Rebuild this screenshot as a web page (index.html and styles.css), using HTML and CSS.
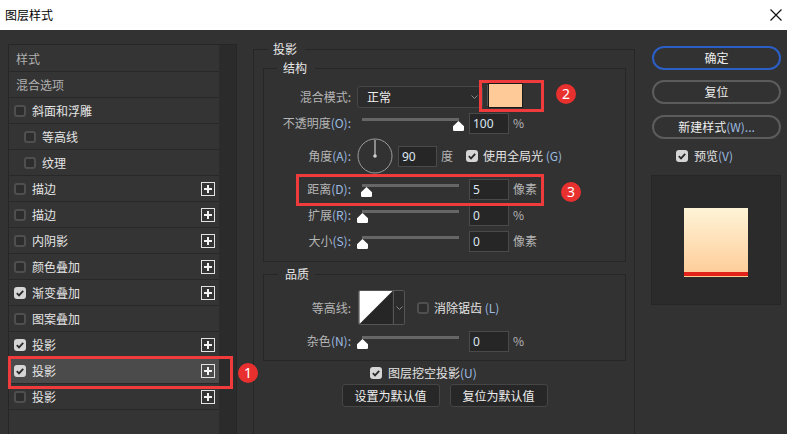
FILE: index.html
```html
<!DOCTYPE html>
<html lang="zh-CN">
<head>
<meta charset="utf-8">
<title>图层样式</title>
<link rel="stylesheet" href="styles.css">
</head>
<body>
<div class="window">
  <header class="titlebar">
    <span class="title">图层样式</span>
    <svg class="close" viewBox="0 0 12 12" width="12" height="12"><path d="M0.5 0.5L11.5 11.5M11.5 0.5L0.5 11.5" stroke="#111" stroke-width="1.2" fill="none"/></svg>
  </header>

  <div class="main">
    <aside class="styles-panel">
      <div class="list">
        <div class="row head">样式</div>
        <div class="row head">混合选项</div>
        <div class="row"><span class="cb"></span><span class="name">斜面和浮雕</span></div>
        <div class="row sub"><span class="cb"></span><span class="name">等高线</span></div>
        <div class="row sub"><span class="cb"></span><span class="name">纹理</span></div>
        <div class="row"><span class="cb"></span><span class="name">描边</span><svg class="plus" viewBox="0 0 14 14" width="14" height="14"><rect x="0.5" y="0.5" width="13" height="13" fill="none" stroke="#e2e2e2"/><path d="M7 3v8M3 7h8" stroke="#f2f2f2" stroke-width="2"/></svg></div>
        <div class="row"><span class="cb"></span><span class="name">描边</span><svg class="plus" viewBox="0 0 14 14" width="14" height="14"><rect x="0.5" y="0.5" width="13" height="13" fill="none" stroke="#e2e2e2"/><path d="M7 3v8M3 7h8" stroke="#f2f2f2" stroke-width="2"/></svg></div>
        <div class="row"><span class="cb"></span><span class="name">内阴影</span><svg class="plus" viewBox="0 0 14 14" width="14" height="14"><rect x="0.5" y="0.5" width="13" height="13" fill="none" stroke="#e2e2e2"/><path d="M7 3v8M3 7h8" stroke="#f2f2f2" stroke-width="2"/></svg></div>
        <div class="row"><span class="cb"></span><span class="name">颜色叠加</span><svg class="plus" viewBox="0 0 14 14" width="14" height="14"><rect x="0.5" y="0.5" width="13" height="13" fill="none" stroke="#e2e2e2"/><path d="M7 3v8M3 7h8" stroke="#f2f2f2" stroke-width="2"/></svg></div>
        <div class="row"><span class="cb on"><svg viewBox="0 0 12 12" width="12" height="12"><path d="M2.8 6.2l2.2 2.2 4.2-4.6" fill="none" stroke="#2a2a2a" stroke-width="1.8"/></svg></span><span class="name">渐变叠加</span><svg class="plus" viewBox="0 0 14 14" width="14" height="14"><rect x="0.5" y="0.5" width="13" height="13" fill="none" stroke="#e2e2e2"/><path d="M7 3v8M3 7h8" stroke="#f2f2f2" stroke-width="2"/></svg></div>
        <div class="row"><span class="cb"></span><span class="name">图案叠加</span></div>
        <div class="row"><span class="cb on"><svg viewBox="0 0 12 12" width="12" height="12"><path d="M2.8 6.2l2.2 2.2 4.2-4.6" fill="none" stroke="#2a2a2a" stroke-width="1.8"/></svg></span><span class="name">投影</span><svg class="plus" viewBox="0 0 14 14" width="14" height="14"><rect x="0.5" y="0.5" width="13" height="13" fill="none" stroke="#e2e2e2"/><path d="M7 3v8M3 7h8" stroke="#f2f2f2" stroke-width="2"/></svg></div>
        <div class="row sel"><span class="cb on"><svg viewBox="0 0 12 12" width="12" height="12"><path d="M2.8 6.2l2.2 2.2 4.2-4.6" fill="none" stroke="#2a2a2a" stroke-width="1.8"/></svg></span><span class="name">投影</span><svg class="plus" viewBox="0 0 14 14" width="14" height="14"><rect x="0.5" y="0.5" width="13" height="13" fill="none" stroke="#e2e2e2"/><path d="M7 3v8M3 7h8" stroke="#f2f2f2" stroke-width="2"/></svg></div>
        <div class="row"><span class="cb"></span><span class="name">投影</span><svg class="plus" viewBox="0 0 14 14" width="14" height="14"><rect x="0.5" y="0.5" width="13" height="13" fill="none" stroke="#e2e2e2"/><path d="M7 3v8M3 7h8" stroke="#f2f2f2" stroke-width="2"/></svg></div>
      </div>
      <div class="scroll"></div>
    </aside>

    <section class="settings">
      <fieldset class="outer">
        <legend>投影</legend>

        <fieldset class="sect">
          <legend>结构</legend>
          <div class="form">
            <span class="lbl">混合模式:</span>
            <div class="ctl">
              <div class="select"><span>正常</span><svg viewBox="0 0 7 4" width="7" height="4"><path d="M0.5 0.5L3.5 3.5L6.5 0.5" fill="none" stroke="#8a8a8a"/></svg></div>
              <span class="swatch"></span>
            </div>

            <span class="lbl">不透明度<span class="k">(O):</span></span>
            <div class="ctl">
              <div class="slider"><div class="track"></div><svg class="thumb" style="margin-left:96px" viewBox="0 0 11 10" width="11" height="10"><path d="M5.5 0L11 5.2V8.8Q11 10 9.8 10H1.2Q0 10 0 8.8V5.2Z" fill="#fff"/></svg></div>
              <span class="num">100</span>
              <span class="unit k">%</span>
            </div>

            <span class="lbl">角度<span class="k">(A):</span></span>
            <div class="ctl">
              <svg class="dial" viewBox="0 0 36 36" width="36" height="36"><circle cx="18" cy="18" r="17" fill="none" stroke="#9c9c9c"/><path d="M18 18V2" stroke="#c8c8c8" stroke-width="1.2"/><circle cx="18" cy="18" r="1.8" fill="#d0d0d0"/></svg>
              <span class="num angle">90</span>
              <span class="unit">度</span>
              <span class="cb on global"><svg viewBox="0 0 12 12" width="12" height="12"><path d="M2.8 6.2l2.2 2.2 4.2-4.6" fill="none" stroke="#2a2a2a" stroke-width="1.8"/></svg></span>
              <span class="opt">使用全局光 <span class="k">(G)</span></span>
            </div>

            <span class="lbl">距离<span class="k">(D):</span></span>
            <div class="ctl">
              <div class="slider"><div class="track"></div><svg class="thumb" style="margin-left:4px" viewBox="0 0 11 10" width="11" height="10"><path d="M5.5 0L11 5.2V8.8Q11 10 9.8 10H1.2Q0 10 0 8.8V5.2Z" fill="#fff"/></svg></div>
              <span class="num">5</span>
              <span class="unit">像素</span>
            </div>

            <span class="lbl">扩展<span class="k">(R):</span></span>
            <div class="ctl">
              <div class="slider"><div class="track"></div><svg class="thumb" style="margin-left:0px" viewBox="0 0 11 10" width="11" height="10"><path d="M5.5 0L11 5.2V8.8Q11 10 9.8 10H1.2Q0 10 0 8.8V5.2Z" fill="#fff"/></svg></div>
              <span class="num">0</span>
              <span class="unit k">%</span>
            </div>

            <span class="lbl">大小<span class="k">(S):</span></span>
            <div class="ctl">
              <div class="slider"><div class="track"></div><svg class="thumb" style="margin-left:0px" viewBox="0 0 11 10" width="11" height="10"><path d="M5.5 0L11 5.2V8.8Q11 10 9.8 10H1.2Q0 10 0 8.8V5.2Z" fill="#fff"/></svg></div>
              <span class="num">0</span>
              <span class="unit">像素</span>
            </div>
          </div>
        </fieldset>

        <fieldset class="sect quality">
          <legend>品质</legend>
          <div class="form">
            <span class="lbl">等高线:</span>
            <div class="ctl">
              <div class="contour">
                <svg viewBox="0 0 35 35" width="35" height="35"><rect width="35" height="35" fill="#262626"/><path d="M0 0H35L0 35Z" fill="#fff"/></svg>
                <span class="drop"><svg viewBox="0 0 7 4" width="7" height="4"><path d="M0.5 0.5L3.5 3.5L6.5 0.5" fill="none" stroke="#8a8a8a"/></svg></span>
              </div>
              <span class="cb anti"></span>
              <span class="opt">消除锯齿 <span class="k">(L)</span></span>
            </div>

            <span class="lbl">杂色<span class="k">(N):</span></span>
            <div class="ctl">
              <div class="slider"><div class="track"></div><svg class="thumb" style="margin-left:0px" viewBox="0 0 11 10" width="11" height="10"><path d="M5.5 0L11 5.2V8.8Q11 10 9.8 10H1.2Q0 10 0 8.8V5.2Z" fill="#fff"/></svg></div>
              <span class="num">0</span>
              <span class="unit k">%</span>
            </div>
          </div>
        </fieldset>

        <div class="knockout">
          <span class="cb on"><svg viewBox="0 0 12 12" width="12" height="12"><path d="M2.8 6.2l2.2 2.2 4.2-4.6" fill="none" stroke="#2a2a2a" stroke-width="1.8"/></svg></span>
          <span class="opt">图层挖空投影<span class="k">(U)</span></span>
        </div>

        <div class="defaults">
          <span class="dbtn">设置为默认值</span>
          <span class="dbtn">复位为默认值</span>
        </div>
      </fieldset>
    </section>

    <aside class="actions">
      <span class="btn primary">确定</span>
      <span class="btn">复位</span>
      <span class="btn new">新建样式<span class="k">(W)...</span></span>
      <div class="preview-toggle">
        <span class="cb on"><svg viewBox="0 0 12 12" width="12" height="12"><path d="M2.8 6.2l2.2 2.2 4.2-4.6" fill="none" stroke="#2a2a2a" stroke-width="1.8"/></svg></span>
        <span class="opt">预览<span class="k">(V)</span></span>
      </div>
      <div class="preview"><div class="sample"></div></div>
    </aside>
  </div>

  <div class="mark mark-1"></div>
  <div class="mark mark-2"></div>
  <div class="mark mark-3"></div>
  <span class="badge badge-1">1</span>
  <span class="badge badge-2">2</span>
  <span class="badge badge-3">3</span>
</div>
</body>
</html>
```

FILE: styles.css
```css
* { box-sizing: border-box; }

html, body {
  margin: 0;
  padding: 0;
}

body {
  width: 787px;
  height: 434px;
  overflow: hidden;
  background: #323232;
  font-family: "Noto Sans CJK SC", "Noto Sans", sans-serif;
  font-size: 12px;
  line-height: 16px;
  color: #e6e6e6;
}

.window {
  position: relative;
  width: 787px;
  height: 434px;
  overflow: hidden;
}

/* ---------- title bar ---------- */
.titlebar {
  height: 30px;
  background: #ffffff;
  display: flex;
  align-items: center;
  justify-content: space-between;
  padding: 0 5px;
  color: #000;
  font-size: 12px;
}

.close { display: block; }

/* ---------- main ---------- */
.main {
  display: flex;
  align-items: flex-start;
  padding-left: 8px;
  height: 404px;
}

/* ---------- left styles list ---------- */
.styles-panel {
  margin-top: 14px;
  width: 229px;
  height: 410px;
  border: 1px solid #262626;
  padding-top: 1px;
  background: #343434;
  display: flex;
}

.list { width: 210px; }

.scroll {
  width: 17px;
  background: #2b2b2b;
  margin-top: -1px;
}

.row {
  height: 26px;
  border-bottom: 1px solid #282828;
  display: flex;
  align-items: center;
  gap: 6px;
  padding: 0 4px 0 5px;
  color: #e4e4e4;
  white-space: nowrap;
}

.row.head {
  padding-left: 7px;
  color: #b0b0b0;
}

.row.sub { padding-left: 15px; }

.row.sel { background: #4b4b4b; }

.row .name { flex: 1; }

.plus { display: block; flex: none; }

/* checkbox */
.cb {
  flex: none;
  width: 12px;
  height: 12px;
  border: 2px solid #4f4f4f;
  border-radius: 3px;
  background: #2d2d2d;
  display: inline-block;
}

.cb.on {
  border: 0;
  background: #d6d6d6;
}

.cb svg { display: block; }

/* ---------- settings ---------- */
.settings {
  margin-left: 16px;
  margin-top: 11px;
  width: 382px;
}

fieldset {
  margin: 0;
  min-width: 0;
  border: 1px solid #262626;
}

legend {
  font-size: 12px;
  line-height: 16px;
  height: 16px;
  color: #e8e8e8;
}

.outer {
  padding: 3px 8px 40px 9px;
}

.outer > legend {
  margin-left: 5px;
  padding: 0 8px 0 5px;
}

.sect {
  padding: 10px 0 9px 0;
}

.sect > legend {
  margin-left: 13px;
  padding: 0 8px 0 6px;
}

.quality {
  margin-top: 4px;
  padding: 8px 0 8px 0;
}

.quality > legend {
  margin-left: 14px;
  padding: 0 6px 0 7px;
}

.form {
  display: grid;
  grid-template-columns: 87px auto;
  column-gap: 6px;
  row-gap: 4px;
  align-items: center;
}

.quality .form { row-gap: 5px; }

.lbl {
  text-align: right;
  color: #b5b5b5;
  white-space: nowrap;
}

.k { color: #9dbbe0; }

.ctl {
  display: flex;
  align-items: center;
  min-height: 22px;
  white-space: nowrap;
}

.select {
  width: 126px;
  height: 22px;
  border: 1px solid #474747;
  border-radius: 3px;
  background: #2c2c2c;
  display: flex;
  align-items: center;
  justify-content: space-between;
  padding: 0 4px 0 9px;
  color: #eeeeee;
}

.select svg { display: block; }

.swatch {
  width: 35px;
  height: 25px;
  margin: -3px 0 0 5px;
  background: #fecb98;
  border: 1px solid #1a1a1a;
  box-shadow: -3px 0 0 -2px #555;
}

.slider {
  width: 107px;
  height: 22px;
  flex: none;
}

.track {
  height: 3px;
  margin: 6px 5px 0;
  background: #666666;
}

.thumb { display: block; }

.num {
  flex: none;
  width: 40px;
  height: 21px;
  margin-left: 5px;
  border: 1px solid #4a4a4a;
  background: #262626;
  color: #dce6f2;
  padding-left: 3px;
  font-family: "Noto Sans", sans-serif;
  line-height: 19px;
}

.num.angle { width: 39px; }

.unit {
  margin-left: 4px;
  color: #b5b5b5;
}

.dial {
  display: block;
  margin-left: 0;
  width: 36px;
  height: 36px;
}

.cb.global { margin-left: 13px; }

.opt {
  margin-left: 5px;
  color: #e4e4e4;
}

.contour {
  margin-left: 1px;
  display: flex;
  height: 35px;
  border: 1px solid #555;
  border-radius: 2px;
  overflow: hidden;
}

.contour > svg {
  display: block;
  width: 34px;
  height: 33px;
}

.drop {
  width: 11px;
  border-left: 1px solid #555;
  background: #2c2c2c;
  display: flex;
  align-items: center;
  justify-content: center;
}

.drop svg { display: block; }

.cb.anti { margin-left: 12px; }

.knockout {
  margin-top: 3px;
  height: 18px;
  padding-left: 107px;
  display: flex;
  align-items: center;
}

.knockout .opt { margin-left: 6px; }

.defaults {
  margin-top: 2px;
  display: flex;
  justify-content: center;
  gap: 10px;
}

.dbtn {
  width: 98px;
  height: 23px;
  border: 1px solid #464646;
  border-radius: 3px;
  background: #272727;
  color: #eeeeee;
  text-align: center;
  line-height: 21px;
}

/* ---------- right column ---------- */
.actions {
  margin-left: 17px;
  margin-top: 16px;
  width: 129px;
  display: flex;
  flex-direction: column;
}

.btn {
  height: 24px;
  border: 2px solid #5c5c5c;
  border-radius: 12px;
  text-align: center;
  line-height: 20px;
  color: #eeeeee;
}

.btn + .btn { margin-top: 10px; }

.btn.new { margin-top: 11px; }

.btn.primary { border-color: #2b5fc6; }

.preview-toggle {
  margin-top: 9px;
  height: 16px;
  padding-left: 24px;
  display: flex;
  align-items: center;
}

.preview-toggle .opt { margin-left: 6px; }

.preview {
  margin-top: 11px;
  margin-left: -1px;
  width: 130px;
  height: 130px;
  background: #2b2b2b;
  border: 1px solid #262626;
  display: flex;
  justify-content: center;
  padding-top: 32px;
}

.sample {
  width: 64px;
  height: 69px;
  background:
    linear-gradient(to bottom, transparent 64px, #e2231a 64px, #e2231a 68px, transparent 68px),
    linear-gradient(to bottom, #fef4d7, #fecb96);
}

/* ---------- annotations ---------- */
.mark {
  position: absolute;
  border: 3px solid #ef3b3b;
}

.mark-1 { left: 8px;   top: 356px; width: 225px; height: 33px; }
.mark-2 { left: 479px; top: 80px;  width: 65px;  height: 32px; }
.mark-3 { left: 296px; top: 174px; width: 248px; height: 32px; }

.badge {
  position: absolute;
  width: 20px;
  height: 20px;
  border-radius: 50%;
  background: #e8302f;
  color: #fff;
  font-family: "Noto Sans", sans-serif;
  font-weight: normal;
  font-size: 14px;
  line-height: 20px;
  text-align: center;
}

.badge-1 { left: 238px; top: 363px; }
.badge-2 { left: 556px; top: 84px; }
.badge-3 { left: 561px; top: 182px; }
```
